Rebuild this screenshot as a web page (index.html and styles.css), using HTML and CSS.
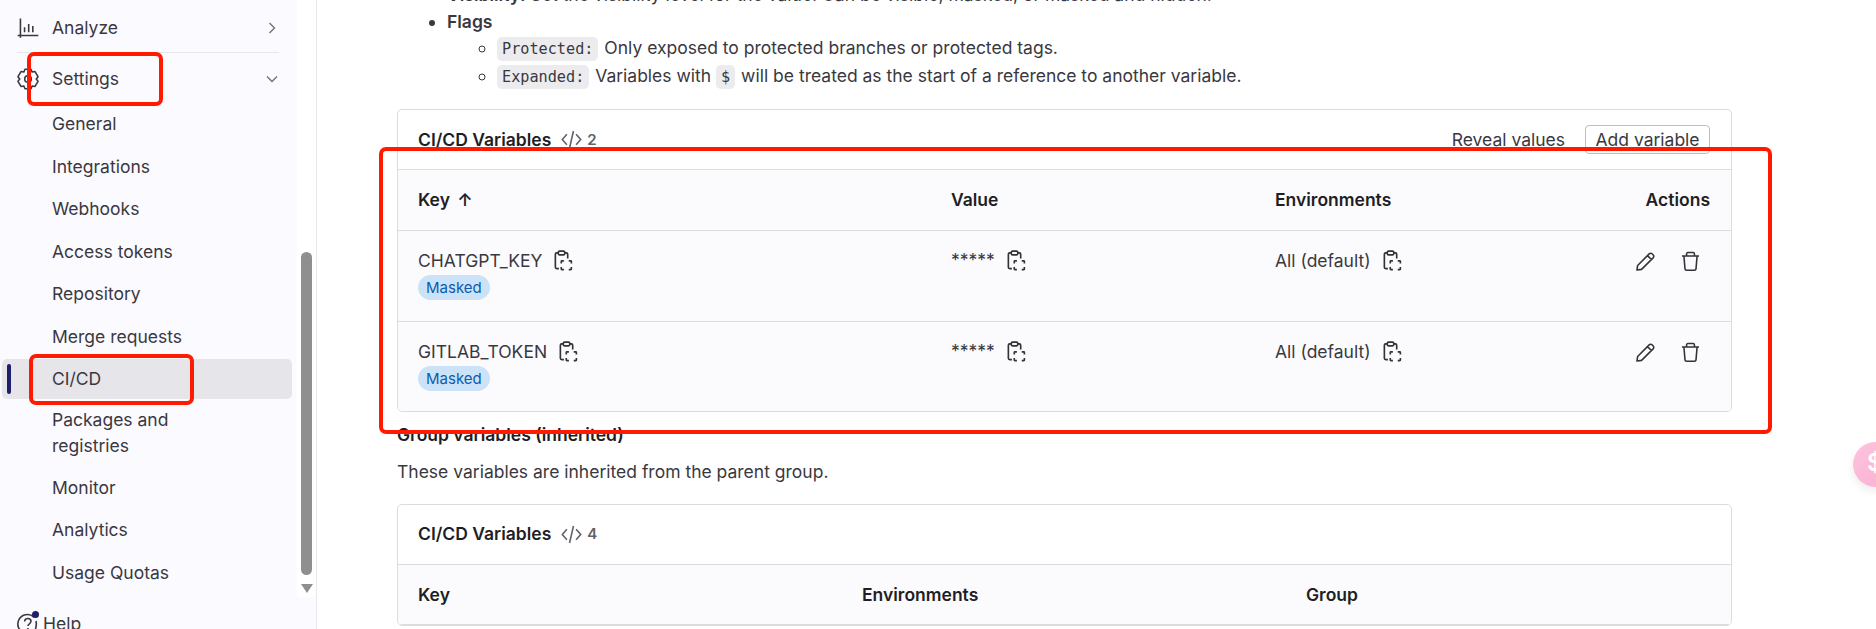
FILE: index.html
```html
<!DOCTYPE html>
<html lang="en">
<head>
  <meta charset="UTF-8">
  <title>CI/CD Settings</title>
  <link rel="stylesheet" href="styles.css">
</head>
<body>
  <svg class="icon-defs" width="0" height="0">
    <symbol id="i-copy" viewBox="0 0 16 16">
      <path d="M4 2.200H2.800c-.6 0-1 .4-1 1v10c0 .6.4 1 1 1H4.500M9 2.200h1.200c.6 0 1 .4 1 1v3.300" fill="none" stroke="currentColor" stroke-width="1.250"/>
      <rect x="4" y=".9" width="5" height="2.800" rx="1" fill="none" stroke="currentColor" stroke-width="1.250"/>
      <path d="M6.300 10.300V8.800c0-.3.2-.5.5-.5h1.500M12 8.300h1.500c.3 0 .5.2.5.5v1.500M14 13v1.500c0 .3-.2.5-.5.5H12M8.300 15H6.800c-.3 0-.5-.2-.5-.5V13" fill="none" stroke="currentColor" stroke-width="1.250"/>
    </symbol>
    <symbol id="i-code" viewBox="0 0 16 16">
      <path d="M4.500 4 1 8l3.500 4M11.500 4 15 8l-3.500 4M9.500 1.500 6.500 14.500" fill="none" stroke="currentColor" stroke-width="1.200"/>
    </symbol>
    <symbol id="i-pencil" viewBox="0 0 16 16">
      <path d="M1.500 14.500 2 11 10.800 2.200c.7-.7 1.600-.7 2.200-.1l.9.9c.6.6.6 1.500-.1 2.200L5 14zM9.500 3.500l3 3" fill="none" stroke="currentColor" stroke-width="1.200" stroke-linejoin="round"/>
    </symbol>
    <symbol id="i-trash" viewBox="0 0 16 16">
      <path d="M1.500 3.800h13M5 3.500V2.200c0-.6.4-1 1-1h4c.6 0 1 .4 1 1v1.300M3 4l.8 9.600c.1.7.5 1.100 1.200 1.100h6c.7 0 1.100-.4 1.200-1.100L13 4" fill="none" stroke="currentColor" stroke-width="1.200"/>
    </symbol>
  </svg>

  <div class="app">
    <aside class="sidebar">
      <div class="sidebar-scroll">
        <nav class="nav">
          <div class="nav-head">
            <svg class="nav-icon" viewBox="0 0 16 16"><path d="M.5 13.500h15M2.500 1v14M5.500 7.500v3.500M8.500 5v6M11.500 6.500v4.500" fill="none" stroke="currentColor" stroke-width="1.150"/></svg>
            <span class="nav-label">Analyze</span>
            <svg class="chevron" viewBox="0 0 16 16"><path d="m5.500 3 5 5-5 5" fill="none" stroke="currentColor" stroke-width="1.400"/></svg>
          </div>
          <div class="nav-divider"></div>
          <div class="nav-head nav-head-open">
            <svg class="nav-icon" viewBox="0 0 16 16"><path d="M5.800.9h4.400l.8 2 2.100-.3 2.200 3.700L14 8l1.300 1.700-2.200 3.700-2.100-.3-.8 2H5.800l-.8-2-2.100.3L.7 9.700 2 8 .7 6.300l2.200-3.700 2.100.3z" fill="none" stroke="currentColor" stroke-width="1.150" stroke-linejoin="round"/><circle cx="8" cy="8" r="2.400" fill="none" stroke="currentColor" stroke-width="1.150"/></svg>
            <span class="nav-label">Settings</span>
            <svg class="chevron" viewBox="0 0 16 16"><path d="m3 5.500 5 5 5-5" fill="none" stroke="currentColor" stroke-width="1.400"/></svg>
          </div>
          <a class="nav-item">General</a>
          <a class="nav-item">Integrations</a>
          <a class="nav-item">Webhooks</a>
          <a class="nav-item">Access tokens</a>
          <a class="nav-item">Repository</a>
          <a class="nav-item">Merge requests</a>
          <a class="nav-item active">CI/CD</a>
          <a class="nav-item two-line">Packages and<br>registries</a>
          <a class="nav-item">Monitor</a>
          <a class="nav-item">Analytics</a>
          <a class="nav-item">Usage Quotas</a>
        </nav>
        <div class="scrollbar">
          <div class="scroll-thumb"></div>
          <div class="scroll-arrow"></div>
        </div>
      </div>
      <div class="sidebar-foot">
        <svg class="help-icon" viewBox="0 0 22 22"><path d="M17 4.200A9.500 9.500 0 1 0 11 20.500" fill="none" stroke="currentColor" stroke-width="1.600"/><path d="M7.600 8.500c.1-2 1.500-3 3.200-3 1.900 0 3.200 1.200 3.200 2.800 0 2.400-3.100 2.500-3.100 4.700" fill="none" stroke="currentColor" stroke-width="1.600"/><circle cx="10.900" cy="16" r="1.100" fill="currentColor"/><path d="M19 8c.6 3 .2 7.500-2 12" fill="none" stroke="currentColor" stroke-width="1.600"/></svg>
        <span class="help-dot"></span>
        <span>Help</span>
      </div>
    </aside>

    <main class="main">
      <ul class="notes">
        <li class="notes-clipped"><strong>Visibility:</strong> Set the visibility level for the value. Can be visible, masked, or masked and hidden.</li>
        <li><strong>Flags</strong>
          <ul>
            <li><code>Protected:</code> Only exposed to protected branches or protected tags.</li>
            <li><code>Expanded:</code> Variables with <code>$</code> will be treated as the start of a reference to another variable.</li>
          </ul>
        </li>
      </ul>

      <section class="card">
        <header class="card-head">
          <h3>CI/CD Variables</h3>
          <svg class="count-icon"><use href="#i-code"/></svg>
          <span class="count">2</span>
          <div class="card-actions">
            <span>Reveal values</span>
            <button class="btn">Add variable</button>
          </div>
        </header>
        <table class="vars">
          <colgroup><col class="col-key"><col class="col-value"><col class="col-env"><col></colgroup>
          <thead>
            <tr><th>Key <span class="sort">↑</span></th><th>Value</th><th>Environments</th><th class="right">Actions</th></tr>
          </thead>
          <tbody>
            <tr>
              <td>
                <div class="cell-line">CHATGPT_KEY <svg class="copy"><use href="#i-copy"/></svg></div>
                <span class="badge">Masked</span>
              </td>
              <td><div class="cell-line"><span class="stars">*****</span> <svg class="copy"><use href="#i-copy"/></svg></div></td>
              <td><div class="cell-line">All (default) <svg class="copy"><use href="#i-copy"/></svg></div></td>
              <td><div class="row-actions"><svg class="action"><use href="#i-pencil"/></svg><svg class="action"><use href="#i-trash"/></svg></div></td>
            </tr>
            <tr>
              <td>
                <div class="cell-line">GITLAB_TOKEN <svg class="copy"><use href="#i-copy"/></svg></div>
                <span class="badge">Masked</span>
              </td>
              <td><div class="cell-line"><span class="stars">*****</span> <svg class="copy"><use href="#i-copy"/></svg></div></td>
              <td><div class="cell-line">All (default) <svg class="copy"><use href="#i-copy"/></svg></div></td>
              <td><div class="row-actions"><svg class="action"><use href="#i-pencil"/></svg><svg class="action"><use href="#i-trash"/></svg></div></td>
            </tr>
          </tbody>
        </table>
      </section>

      <h2 class="group-title">Group variables (inherited)</h2>
      <p class="group-desc">These variables are inherited from the parent group.</p>

      <section class="card">
        <header class="card-head">
          <h3>CI/CD Variables</h3>
          <svg class="count-icon"><use href="#i-code"/></svg>
          <span class="count">4</span>
        </header>
        <table class="vars">
          <colgroup><col class="col-third"><col class="col-third"><col></colgroup>
          <thead>
            <tr><th>Key</th><th>Environments</th><th>Group</th></tr>
          </thead>
        </table>
      </section>
    </main>
  </div>

  <!-- annotations drawn over the screenshot -->
  <div class="mark mark-settings"></div>
  <div class="mark mark-cicd"></div>
  <div class="mark mark-table"></div>

  <div class="fab">$</div>
</body>
</html>
```

FILE: styles.css
```css
/* General Styles */
html, body {
  margin: 0;
  height: 100%;
  overflow: hidden;
  background-color: #fff;
}

body {
  font-family: Inter, "Noto Sans", sans-serif;
  font-size: 17.5px;
  line-height: 25.5px;
  color: #3a383f;
}

.icon-defs {
  position: absolute;
}

.app {
  display: flex;
  height: 629px;
}

/* Sidebar */
.sidebar {
  width: 316px;
  flex-shrink: 0;
  border-right: 1px solid #e8e8ec;
  background-color: #fbfaff;
  display: flex;
  flex-direction: column;
}

.sidebar-scroll {
  display: flex;
  height: 597px;
  flex-shrink: 0;
}

.nav {
  width: 297px;
  padding: 7px 5px 0 2px;
  box-sizing: border-box;
}

.nav-head {
  display: flex;
  align-items: center;
  height: 42px;
  padding-left: 15px;
  padding-right: 12px;
}

.nav-head-open {
  margin-bottom: 4px;
}

.nav-icon {
  width: 22px;
  height: 22px;
  margin-right: 13px;
  flex-shrink: 0;
}

.nav-label {
  flex: 1;
}

.chevron {
  width: 16px;
  height: 16px;
  color: #737278;
}

.nav-divider {
  height: 1px;
  background-color: #e6e6ec;
  margin: 3px 13px 5px 15px;
}

.nav-item {
  display: flex;
  align-items: center;
  min-height: 40px;
  margin-bottom: 2.5px;
  padding-left: 50px;
  border-radius: 5px;
  position: relative;
}

.two-line {
  padding-top: 6px;
  padding-bottom: 6px;
  line-height: 26px;
  margin-top: -0.5px;
  margin-bottom: 2.5px;
}

.nav-item.active {
  background-color: #e6e5ea;
}

.nav-item.active::before {
  content: "";
  position: absolute;
  left: 5px;
  top: 5px;
  bottom: 5px;
  width: 4px;
  border-radius: 2px;
  background-color: #1f1e6b;
}

.scrollbar {
  width: 19px;
  background-color: #fff;
  display: flex;
  flex-direction: column;
  align-items: center;
  padding-top: 252px;
  box-sizing: border-box;
}

.scroll-thumb {
  width: 11px;
  height: 323px;
  border-radius: 6px;
  background-color: #8f8f8f;
}

.scroll-arrow {
  width: 0;
  height: 0;
  margin-top: 9px;
  border-left: 6px solid transparent;
  border-right: 6px solid transparent;
  border-top: 9px solid #8f8f8f;
}

.sidebar-foot {
  display: flex;
  align-items: center;
  padding: 14px 0 0 17px;
  position: relative;
}

.help-icon {
  width: 22px;
  height: 22px;
  margin-right: 4px;
}

.help-dot {
  position: absolute;
  left: 32px;
  top: 14px;
  width: 7px;
  height: 7px;
  border-radius: 50%;
  background-color: #1f1e6b;
}

/* Main content */
.main {
  flex: 1;
  padding-left: 80px;
  min-width: 0;
}

.notes {
  margin: -18px 0 0;
  padding-left: 46px;
  width: 1285px;
}

.notes > li {
  margin-left: 4px;
}

.notes ul {
  padding-left: 46px;
  margin: 0;
}

.notes strong {
  font-weight: 600;
}

.notes li {
  line-height: 26.5px;
}

code {
  font-family: "DejaVu Sans Mono", "Liberation Mono", monospace;
  font-size: 15.2px;
  background-color: #ececef;
  border-radius: 5px;
  padding: 3px 5px;
  margin-right: 1px;
}

.notes ul li {
  margin-left: 4px;
}

.card {
  width: 1335px;
  box-sizing: border-box;
  margin-top: 19px;
  border: 1px solid #dcdcde;
  border-radius: 5px;
  overflow: hidden;
  background-color: #fff;
}

.card-head {
  display: flex;
  align-items: center;
  height: 60px;
  box-sizing: border-box;
  padding: 0 21px 0 20px;
  border-bottom: 1px solid #dcdcde;
}

.card-head h3 {
  margin: 0;
  font-size: 17.5px;
  font-weight: 600;
  color: #1f1e24;
}

.count-icon {
  width: 21px;
  height: 21px;
  margin-left: 10px;
  color: #626168;
}

.count {
  margin-left: 5px;
  font-size: 15px;
  font-weight: 600;
  color: #626168;
}

.card-actions {
  margin-left: auto;
  display: flex;
  align-items: center;
  gap: 20px;
}

.btn {
  font: inherit;
  color: #3a383f;
  background-color: #fff;
  border: 1px solid #bfbfc3;
  border-radius: 4px;
  height: 29px;
  width: 125px;
  padding: 0;
}

.vars {
  width: 100%;
  border-collapse: collapse;
  table-layout: fixed;
  background-color: #fbfbfd;
}

.col-key { width: 533px; }
.col-value { width: 324px; }
.col-env { width: 346px; }
.col-third { width: 444px; }

.vars th {
  height: 60px;
  padding: 0 21px 0 20px;
  text-align: left;
  font-weight: 600;
  color: #1f1e24;
  border-bottom: 1px solid #dcdcde;
  box-sizing: border-box;
}

.vars th.right {
  text-align: right;
}

.sort {
  margin-left: 3px;
}

.vars td {
  height: 91px;
  box-sizing: border-box;
  padding: 18px 20px 0;
  vertical-align: top;
  border-bottom: 1px solid #dcdcde;
}

.vars tbody tr:last-child td {
  height: 90px;
  border-bottom: none;
}

.cell-line {
  display: flex;
  align-items: center;
  gap: 10px;
  height: 25px;
}

.stars {
  margin-top: -3px;
}

.copy {
  width: 21px;
  height: 21px;
  color: #333238;
  margin-left: 1px;
  margin-top: -1px;
}

.badge {
  display: inline-block;
  margin-top: 1px;
  padding: 0 8px;
  height: 25px;
  line-height: 25px;
  border-radius: 13px;
  background-color: #cbe2f9;
  color: #0b5cad;
  font-size: 15px;
}

.row-actions {
  display: flex;
  justify-content: flex-end;
  gap: 24px;
  padding-right: 10px;
  padding-top: 2px;
}

.action {
  width: 21px;
  height: 21px;
  color: #333238;
}

.group-title {
  margin: 10px 0 0;
  font-size: 17.5px;
  font-weight: 600;
  line-height: 25px;
  color: #1f1e24;
}

.group-desc {
  margin: 12px 0 0;
}

/* Red annotation boxes */
.mark {
  position: absolute;
  box-sizing: border-box;
  border: 4px solid #ff1a00;
  border-radius: 7px;
}

.mark-settings {
  left: 27px;
  top: 52px;
  width: 136px;
  height: 54px;
}

.mark-cicd {
  left: 29px;
  top: 354px;
  width: 165px;
  height: 51px;
}

.mark-table {
  left: 379px;
  top: 147px;
  width: 1393px;
  height: 287px;
}

/* Floating button at the page edge */
.fab {
  position: absolute;
  left: 1853px;
  top: 442px;
  width: 45px;
  height: 45px;
  border-radius: 50%;
  background: linear-gradient(135deg, #fdc4de, #f9afd0);
  box-shadow: 0 4px 10px rgba(0, 0, 0, 0.08);
  color: #fff;
  font-size: 24px;
  font-weight: 600;
  line-height: 42px;
  padding-left: 14px;
  box-sizing: border-box;
}
```
